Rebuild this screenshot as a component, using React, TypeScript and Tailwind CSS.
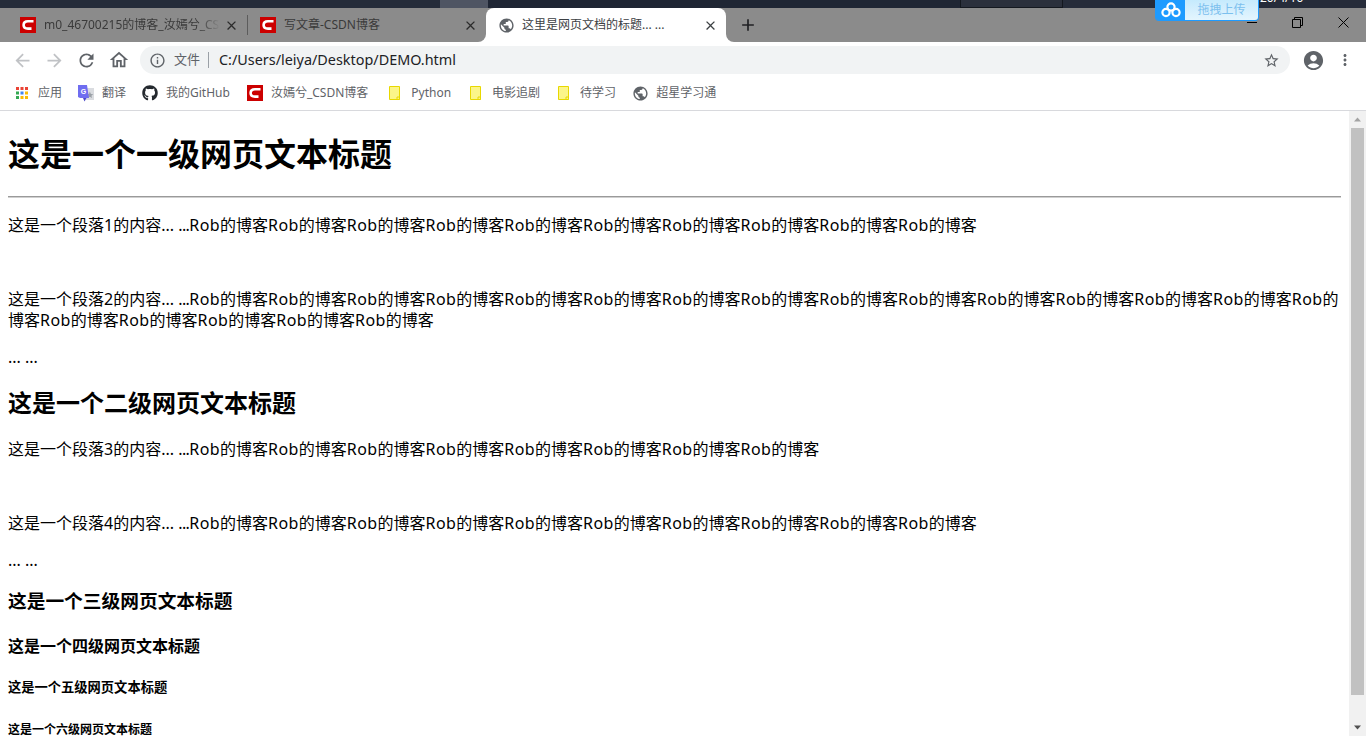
import React from 'react';
import { MdAccountCircle, MdAdd, MdArrowBack, MdArrowForward, MdClose, MdInfoOutline, MdMoreVert, MdOutlineHome, MdPublic, MdRefresh, MdStarBorder } from 'react-icons/md';
import { FaGithub } from 'react-icons/fa';

const Blogs = ({ count }: { count: number }) => (
  <>
    {Array.from({ length: count }, (_, i) => (
      <React.Fragment key={i}>
        <span className="tracking-[0.42px]">Rob</span>的博客
      </React.Fragment>
    ))}
  </>
);

const Para = ({ n, count }: { n: number; count: number }) => (
  <p className="mb-[16px]">
    这是一个段落{n}的内容... <span className="tracking-[-0.6px]">...</span>
    <Blogs count={count} />
  </p>
);

const CsdnIcon = () => (
  <svg width="16" height="16" viewBox="0 0 16 16" className="shrink-0">
    <rect width="16" height="16" fill="#cc0000" />
    <path d="M13.5 4.2 H8 C5 4.2 3.6 6 3.6 8 C3.6 10 5 11.6 8 11.6 H11.5" fill="none" stroke="#fff" strokeWidth="2.6" />
  </svg>
);

const AppsIcon = () => (
  <svg width="14" height="14" viewBox="0 0 14 14" className="shrink-0">
    <rect x="1" y="1" width="3" height="3" fill="#ea4335" />
    <rect x="5.5" y="1" width="3" height="3" fill="#ea4335" />
    <rect x="10" y="1" width="3" height="3" fill="#ea4335" />
    <rect x="1" y="5.5" width="3" height="3" fill="#34a853" />
    <rect x="5.5" y="5.5" width="3" height="3" fill="#4285f4" />
    <rect x="10" y="5.5" width="3" height="3" fill="#fbbc05" />
    <rect x="1" y="10" width="3" height="3" fill="#34a853" />
    <rect x="5.5" y="10" width="3" height="3" fill="#fbbc05" />
    <rect x="10" y="10" width="3" height="3" fill="#fbbc05" />
  </svg>
);

const TranslateIcon = () => (
  <svg width="16" height="17" viewBox="0 0 16 17" className="shrink-0">
    <path d="M6 3 H16 V15 H8 Z" fill="#dadce0" />
    <path d="M11.8 6.5 l1.1 2.6 2.4.1-1.9 1.5.7 2.4-2.3-1.4-2 1.4.6-2.4-1.8-1.5 2.4-.1z" fill="#9aa0a6" />
    <path d="M0 0 H9 L11 13 H2 L0 12 Z" fill="#6f6df0" />
    <path d="M5 13 H8.5 L6.5 16.5 Z" fill="#4b48c9" />
    <text x="2.8" y="9" fontSize="7" fontWeight="700" fill="#fff" fontFamily="Liberation Sans, sans-serif">G</text>
  </svg>
);

const FolderNote = () => (
  <svg width="11" height="14" viewBox="0 0 11 14" className="shrink-0">
    <path d="M.5.5 H10.5 V13.5 H.5 Z" fill="#fbf589" stroke="#e8d800" />
    <path d="M8 11 H10.5 V13.5 H8 Z" fill="#fbf589" stroke="#e8d800" />
  </svg>
);

const NetdiskIcon = () => (
  <svg width="20" height="16" viewBox="0 0 20 16">
    <circle cx="10" cy="5" r="3.6" fill="none" stroke="#fff" strokeWidth="2.2" />
    <circle cx="5" cy="10.5" r="3.6" fill="none" stroke="#fff" strokeWidth="2.2" />
    <circle cx="15" cy="10.5" r="3.6" fill="none" stroke="#fff" strokeWidth="2.2" />
  </svg>
);

const Tab = ({ title, width, titleClass }: { title: string; width: string; titleClass: string }) => (
  <div className={`flex h-[34px] items-center pl-3 pr-2 ${width}`}>
    <CsdnIcon />
    <span className={`ml-2 overflow-hidden text-[12px] whitespace-nowrap text-[#3a3a3a] ${titleClass}`}>{title}</span>
    <MdClose className="ml-auto shrink-0 text-[#2b2b2b]" size={15} />
  </div>
);

const Bookmark = ({ icon, label, className }: { icon: React.ReactNode; label: string; className: string }) => (
  <div className={`flex items-center ${className}`}>
    {icon}
    <span className="text-[12px] whitespace-nowrap text-[#5f6368]">{label}</span>
  </div>
);

export default function App() {
  return (
    <div
      className="relative flex h-[736px] w-[1366px] flex-col overflow-hidden bg-white text-black"
      style={{ fontFamily: '"Noto Sans", "Noto Sans CJK SC", sans-serif' }}
    >
      <div className="flex h-[8px] shrink-0">
        <div className="w-[440px] bg-[#252c3a]" />
        <div className="w-[48px] bg-[#4f5563]" />
        <div className="w-[472px] bg-[#1f2634]" />
        <div className="w-[103px] border-x border-b border-[#14181f] bg-[#2b303c]" />
        <div className="flex-1 bg-[#262c3a]" />
      </div>

      <div className="relative flex h-[34px] shrink-0 bg-[#8b8b8b]">
        <Tab
          title="m0_46700215的博客_汝嫣兮_CS"
          width="w-[239px] ml-[8px]"
          titleClass="w-[176px] [mask-image:linear-gradient(to_right,black_88%,transparent)]"
        />
        <div className="mt-[7px] h-[20px] w-px bg-[#5c5c5c]" />
        <Tab title="写文章-CSDN博客" width="w-[238px]" titleClass="w-[176px]" />
        <div className="relative flex h-[34px] w-[240px] items-center rounded-t-[8px] bg-white pl-3 pr-2">
          <div className="absolute bottom-0 left-[-8px] h-[8px] w-[8px] bg-white">
            <div className="h-full w-full rounded-br-[8px] bg-[#8b8b8b]" />
          </div>
          <div className="absolute right-[-8px] bottom-0 h-[8px] w-[8px] bg-white">
            <div className="h-full w-full rounded-bl-[8px] bg-[#8b8b8b]" />
          </div>
          <MdPublic className="shrink-0 text-[#5f6368]" size={17} />
          <span className="ml-[7px] text-[12px] whitespace-nowrap text-[#3c4043]">这里是网页文档的标题... ...</span>
          <MdClose className="ml-auto shrink-0 text-[#3c4043]" size={15} />
        </div>
        <MdAdd className="mt-[7px] ml-[12px] text-[#202124]" size={20} />
        <div className="ml-auto flex items-center pr-[17px] pb-[6px]">
          <div className="h-[1px] w-[10px] bg-black" />
          <svg width="11" height="11" viewBox="0 0 11 11" className="ml-[35px]">
            <path d="M.5 2.5h8v8h-8zM2.5 2.5v-2h8v8h-2" fill="none" stroke="#000" />
          </svg>
          <svg width="11" height="11" viewBox="0 0 11 11" className="ml-[35px]">
            <path d="M.5.5l10 10M10.5.5l-10 10" stroke="#000" />
          </svg>
        </div>
      </div>

      <div className="flex h-[37px] shrink-0 items-center bg-white pb-[1px] pl-[11.5px]">
        <MdArrowBack className="text-[#c0c2c5]" size={21} />
        <MdArrowForward className="ml-[11px] text-[#c0c2c5]" size={21} />
        <MdRefresh className="ml-[11px] text-[#5f6368]" size={21} />
        <MdOutlineHome className="ml-[11px] text-[#5f6368]" size={22} />
        <div className="ml-[10.5px] flex h-[28px] w-[1150px] items-center rounded-full bg-[#f1f3f4] pl-[9px] pr-[10px]">
          <MdInfoOutline className="text-[#5f6368]" size={17} />
          <span className="ml-[8px] text-[13px] text-[#5f6368]">文件</span>
          <div className="mr-[10px] ml-[8px] h-[16px] w-px bg-[#9aa0a6]" />
          <span className="text-[14.4px] text-[#202124]">C:/Users/leiya/Desktop/DEMO.html</span>
          <MdStarBorder className="ml-auto text-[#5f6368]" size={17} />
        </div>
        <MdAccountCircle className="ml-[11.5px] text-[#5f6368]" size={23} />
        <MdMoreVert className="ml-[11.5px] text-[#5f6368]" size={18} />
      </div>

      <div className="flex h-[32px] shrink-0 items-center border-b border-[#d8d9dd] bg-white pb-[3px] pl-[15px]">
        <Bookmark icon={<AppsIcon />} label="应用" className="gap-[9px]" />
        <Bookmark icon={<TranslateIcon />} label="翻译" className="ml-[16px] gap-[8px]" />
        <Bookmark icon={<FaGithub className="text-[#24292e]" size={16} />} label="我的GitHub" className="ml-[16px] gap-[8px]" />
        <Bookmark icon={<CsdnIcon />} label="汝嫣兮_CSDN博客" className="ml-[17px] gap-[8px]" />
        <Bookmark icon={<FolderNote />} label="Python" className="ml-[21px] gap-[11px]" />
        <Bookmark icon={<FolderNote />} label="电影追剧" className="ml-[19px] gap-[11px]" />
        <Bookmark icon={<FolderNote />} label="待学习" className="ml-[18px] gap-[11px]" />
        <Bookmark icon={<MdPublic className="text-[#5f6368]" size={17} />} label="超星学习通" className="ml-[16px] gap-[7px]" />
      </div>

      <div className="flex min-h-0 flex-1">
        <div className="min-w-0 flex-1 overflow-hidden px-[8px] text-[16px] leading-[21px]">
          <h1 className="mt-[22px] mb-[21px] text-[32px] leading-[42px] font-bold">这是一个一级网页文本标题</h1>
          <hr className="mb-[17px] border-t border-b border-t-[#9a9a9a] border-b-[#d0d0d0]" />
          <Para n={1} count={10} />
          <p className="mb-[16px]">&nbsp;</p>
          <Para n={2} count={20} />
          <p className="mb-[19px]">... ...</p>
          <h2 className="mb-[20px] text-[24px] leading-[32px] font-bold">这是一个二级网页文本标题</h2>
          <Para n={3} count={8} />
          <p className="mb-[16px]">&nbsp;</p>
          <Para n={4} count={10} />
          <p className="mb-[17px]">... ...</p>
          <h3 className="mb-[23px] text-[18.72px] leading-[25px] font-bold">这是一个三级网页文本标题</h3>
          <h4 className="mb-[21px] text-[16px] leading-[21px] font-bold">这是一个四级网页文本标题</h4>
          <h5 className="mb-[26px] text-[13.28px] leading-[18px] font-bold">这是一个五级网页文本标题</h5>
          <h6 className="text-[12px] leading-[16px] font-bold">这是一个六级网页文本标题</h6>
        </div>
        <div className="flex w-[17px] shrink-0 flex-col items-center bg-[#f1f1f1]">
          <svg width="17" height="17" viewBox="0 0 17 17" className="shrink-0">
            <path d="M8.5 6.5 L12 10.5 H5 Z" fill="#a3a3a3" />
          </svg>
          <div className="h-[567px] w-[13px] shrink-0 bg-[#c1c1c1]" />
          <svg width="17" height="17" viewBox="0 0 17 17" className="mt-auto shrink-0">
            <path d="M8.5 10.5 L12 6.5 H5 Z" fill="#505050" />
          </svg>
        </div>
      </div>

      <div className="absolute top-0 left-[1155px] flex h-[21px] w-[104px] overflow-hidden rounded-b-[4px] border border-t-0 border-[#1e9bff]">
        <div className="flex w-[29px] items-center justify-center bg-[#1e9bff]">
          <NetdiskIcon />
        </div>
        <div className="flex flex-1 items-center justify-center bg-gradient-to-b from-[#c5eafd] to-[#e4f5fe] text-[12px] text-[#7cc0ee]">拖拽上传</div>
      </div>
      <div className="absolute top-[-8px] left-[1260px] text-[12px] leading-[12px] text-white">20/4/10</div>
    </div>
  );
}
